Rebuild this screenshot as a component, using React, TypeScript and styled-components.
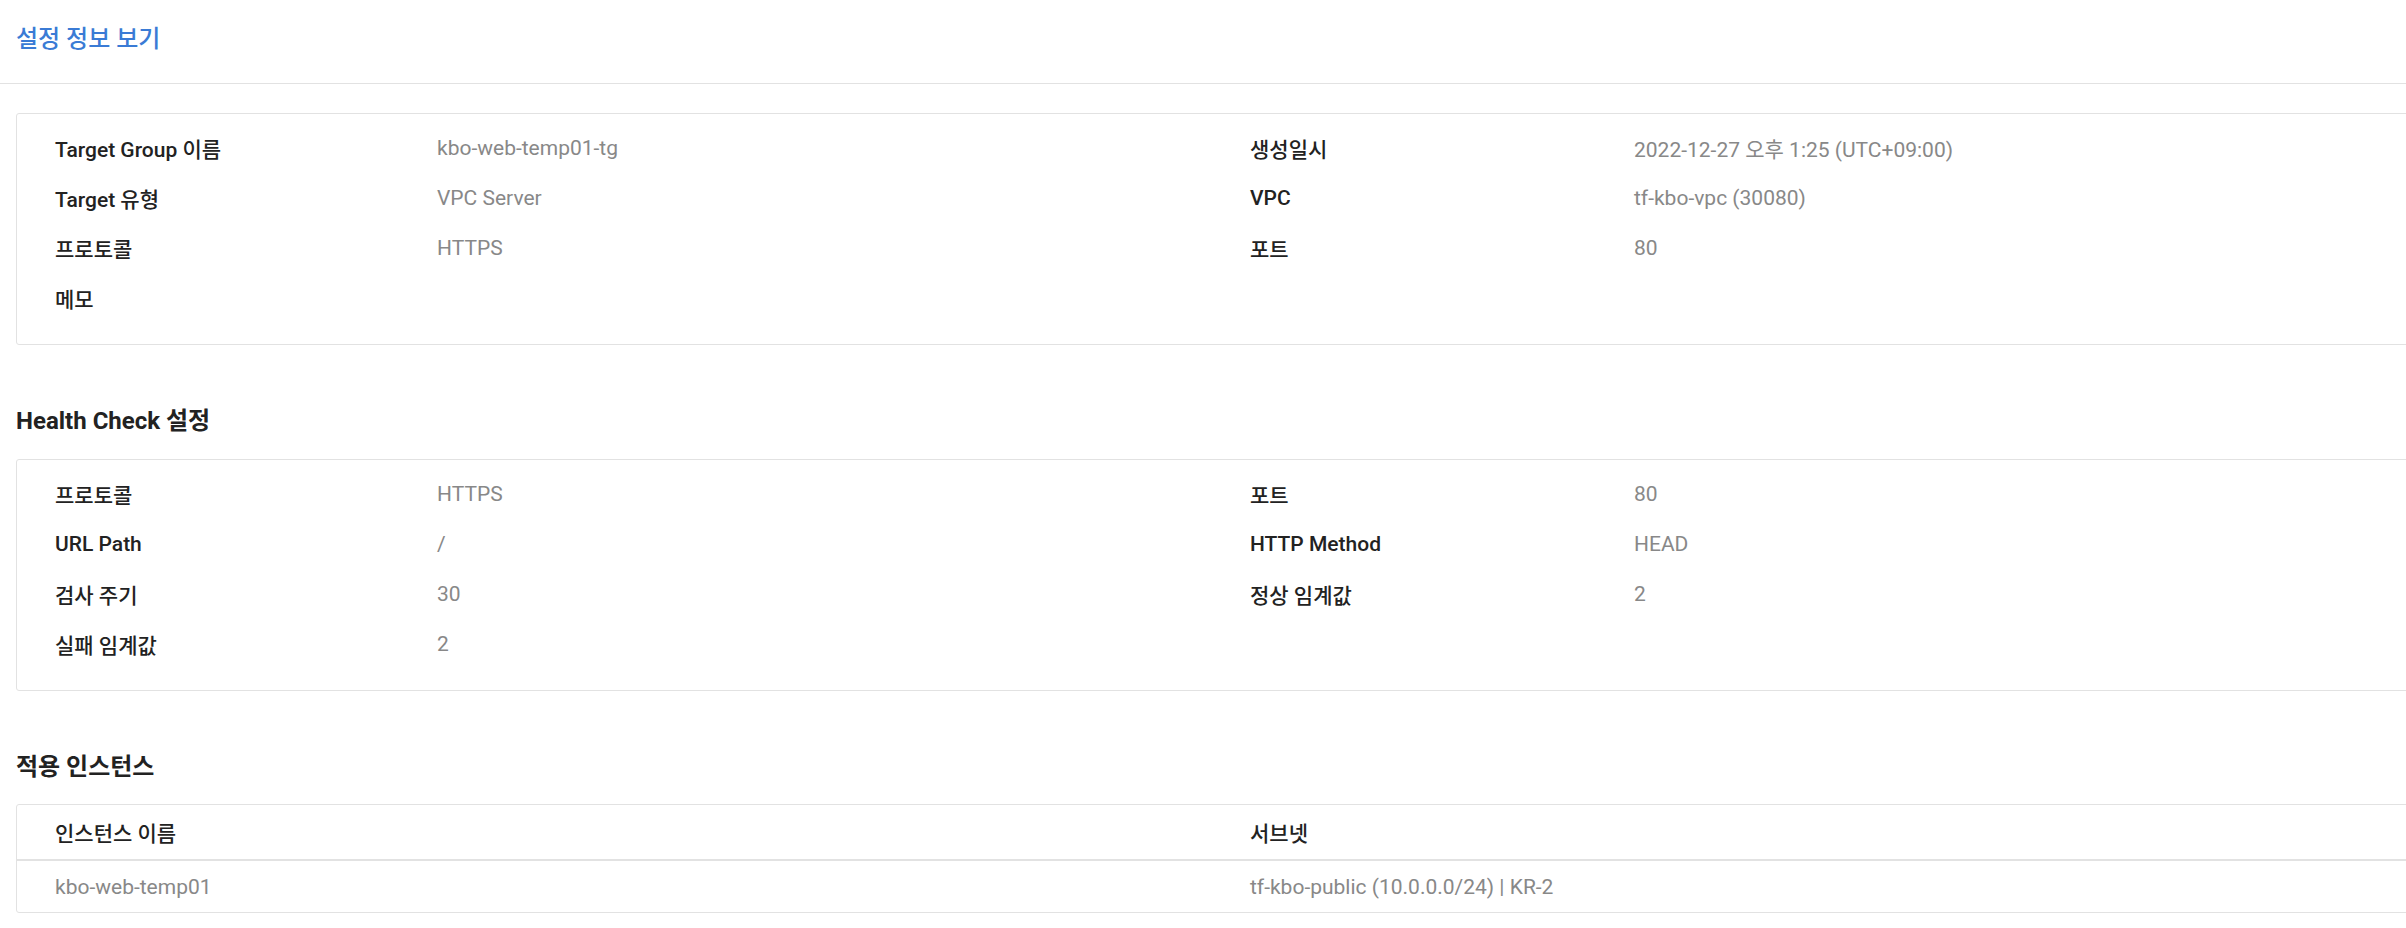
import { createGlobalStyle, styled } from "styled-components";

const GlobalStyle = createGlobalStyle`
  html, body {
    margin: 0;
    padding: 0;
    background: #ffffff;
    overflow: hidden;
  }
  body {
    font-family: Roboto, "Noto Sans CJK KR", "Noto Sans", sans-serif;
    color: #222222;
  }
`;

const Page = styled.main`
  width: 2480px;
`;

const Header = styled.header`
  height: 84px;
  box-sizing: border-box;
  padding: 22px 16px 0;
  border-bottom: 1px solid #e2e2e2;
`;

const Title = styled.h1`
  margin: 0;
  font-size: 24px;
  line-height: 34px;
  font-weight: 500;
  color: #3a7bd5;
`;

const Body = styled.div`
  padding: 29px 0 0 16px;
`;

const SectionTitle = styled.h2<{ $top: number; $bottom: number }>`
  margin: ${(p) => p.$top}px 0 ${(p) => p.$bottom}px;
  font-size: 24px;
  line-height: 34px;
  font-weight: 700;
  color: #222222;
`;

const Box = styled.section`
  border: 1px solid #e2e2e2;
  border-radius: 3px;
  box-sizing: border-box;
`;

const InfoGrid = styled.dl`
  margin: 0;
  padding: 9px 38px 21px 38px;
  display: grid;
  grid-template-columns: 382px 813px 384px 1fr;
  grid-auto-rows: 50px;
  align-items: center;
`;

const Label = styled.dt`
  font-size: 21px;
  font-weight: 500;
  color: #222222;
`;

const Value = styled.dd`
  margin: 0;
  font-size: 21px;
  font-weight: 400;
  color: #888888;
`;

const Table = styled.table`
  width: 100%;
  border-collapse: collapse;
`;

const Th = styled.th`
  height: 54px;
  padding: 0 0 0 38px;
  text-align: left;
  font-size: 21px;
  font-weight: 500;
  color: #222222;
  border-bottom: 2px solid #e2e2e2;
  &:first-child {
    width: 1157px;
  }
`;

const Td = styled.td`
  height: 51px;
  padding: 0 0 0 38px;
  font-size: 21px;
  color: #888888;
`;

type Item = [string, string];

const Pair = ({ label, value }: { label: string; value: string }) => (
  <>
    <Label>{label}</Label>
    <Value>{value}</Value>
  </>
);

const InfoBlock = ({ items }: { items: Item[] }) => (
  <Box>
    <InfoGrid>
      {items.map(([k, v], i) => (
        <Pair key={i} label={k} value={v} />
      ))}
    </InfoGrid>
  </Box>
);

const general: Item[] = [
  ["Target Group 이름", "kbo-web-temp01-tg"],
  ["생성일시", "2022-12-27 오후 1:25 (UTC+09:00)"],
  ["Target 유형", "VPC Server"],
  ["VPC", "tf-kbo-vpc (30080)"],
  ["프로토콜", "HTTPS"],
  ["포트", "80"],
  ["메모", ""],
];

const health: Item[] = [
  ["프로토콜", "HTTPS"],
  ["포트", "80"],
  ["URL Path", "/"],
  ["HTTP Method", "HEAD"],
  ["검사 주기", "30"],
  ["정상 임계값", "2"],
  ["실패 임계값", "2"],
];

export default function App() {
  return (
    <Page>
      <GlobalStyle />
      <Header>
        <Title>설정 정보 보기</Title>
      </Header>
      <Body>
        <InfoBlock items={general} />
        <SectionTitle $top={59} $bottom={21}>
          Health Check 설정
        </SectionTitle>
        <InfoBlock items={health} />
        <SectionTitle $top={59} $bottom={20}>
          적용 인스턴스
        </SectionTitle>
        <Box>
          <Table>
            <thead>
              <tr>
                <Th>인스턴스 이름</Th>
                <Th>서브넷</Th>
              </tr>
            </thead>
            <tbody>
              <tr>
                <Td>kbo-web-temp01</Td>
                <Td>tf-kbo-public (10.0.0.0/24) | KR-2</Td>
              </tr>
            </tbody>
          </Table>
        </Box>
      </Body>
    </Page>
  );
}
